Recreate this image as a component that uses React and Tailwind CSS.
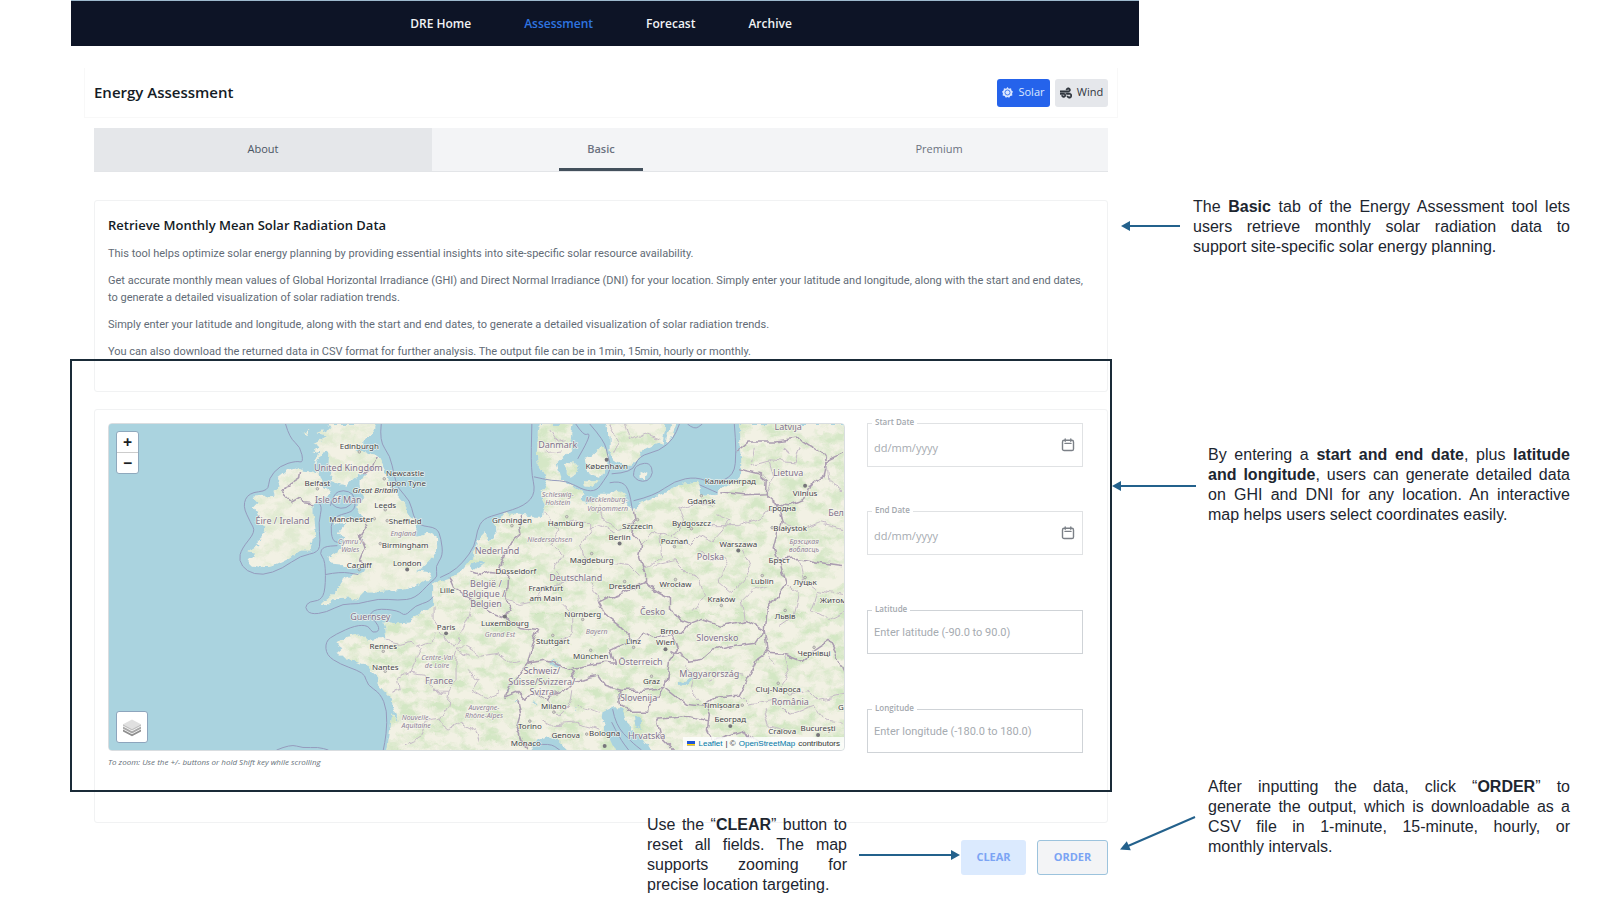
import React from 'react';
import { FaWind } from 'react-icons/fa';

const navItems = [
  { label: 'DRE Home', active: false },
  { label: 'Assessment', active: true },
  { label: 'Forecast', active: false },
  { label: 'Archive', active: false }
];

const paragraphs = [
  'This tool helps optimize solar energy planning by providing essential insights into site-specific solar resource availability.',
  'Get accurate monthly mean values of Global Horizontal Irradiance (GHI) and Direct Normal Irradiance (DNI) for your location. Simply enter your latitude and longitude, along with the start and end dates, to generate a detailed visualization of solar radiation trends.',
  'Simply enter your latitude and longitude, along with the start and end dates, to generate a detailed visualization of solar radiation trends.',
  'You can also download the returned data in CSV format for further analysis. The output file can be in 1min, 15min, hourly or monthly.'
];

// Map geometry, one shared coordinate space (x 108-845, y 423-750)
const landPaths = [
  // Ireland
  'M297 467 287 470 277 478 280 485 272 490 273 495 252 497 257 502 252 507 257 515 254 522 263 527 265 533 255 542 258 545 247 552 255 553 248 560 253 565 262 568 273 565 290 557 300 550 310 550 313 540 315 527 313 513 313 503 323 497 330 493 328 488 322 485 318 473 313 471 303 470Z',
  // Great Britain
  'M327 423 330 427 317 432 327 435 313 442 318 445 310 452 320 450 313 465 322 453 328 452 327 465 333 472 330 480 338 483 347 485 353 478 363 472 366 474 358 482 360 490 363 498 357 507 362 516 356 519 343 518 333 517 335 523 347 522 337 533 345 535 342 542 342 548 327 557 330 562 340 563 348 567 360 568 367 565 365 570 360 573 345 577 340 585 330 595 322 602 328 604 335 598 348 597 355 600 363 592 377 592 390 590 410 587 425 582 432 575 430 572 417 570 423 567 430 560 437 547 437 537 427 532 415 535 417 523 408 513 405 503 393 490 387 478 385 470 377 455 363 452 355 450 363 447 363 440 373 430 375 423Z',
  'M301 432 309 429 306 434ZM334 497 339 493 338 499Z',
  // Continent
  'M387 750 390 730 392 713 399 722 393 705 390 697 383 690 377 683 378 677 372 672 367 665 355 660 345 658 342 655 336 653 342 648 335 643 345 637 360 634 367 640 375 638 386 638 385 628 383 622 390 622 397 623 410 622 412 617 422 612 433 606 433 595 433 583 450 577 462 570 470 560 478 543 483 532 489 526 489 540 496 538 495 527 495 520 507 513 520 513 535 517 542 517 543 510 545 503 540 493 545 487 548 480 538 463 537 450 538 440 538 430 540 423 572 423 570 437 573 448 567 453 558 462 560 470 562 480 573 485 580 490 585 493 580 500 592 502 600 493 612 493 618 488 625 493 628 505 637 510 638 503 653 497 670 490 683 484 697 482 702 485 700 490 705 495 717 493 727 485 740 480 742 473 742 460 740 443 740 423 850 423 850 755 387 755Z',
  // Sweden, Danish islands, Bornholm
  'M605 418 610 437 610 450 613 460 627 465 633 465 640 452 653 445 663 442 667 418Z',
  'M672 420 677 420 669 442 666 440Z',
  'M585 457 592 455 600 447 608 450 608 460 605 473 599 477 587 472ZM565 462 577 463 578 473 572 477 565 472ZM583 480 590 479 598 482 593 487 584 485ZM640 470 647 473 645 478 640 475Z'
];

const waterPaths = [
  'M655 755 643 737 632 730 627 720 625 713 622 707 613 707 603 712 602 718 607 723 603 730 610 738 618 755Z',
  'M634 714 641 720 642 730 636 727ZM526 755 538 740 548 736 558 740 573 755Z',
  'M470 566 481 559 484 562 474 570ZM484 528 492 524 493 536 487 541Z'
];

// Maritime limits as point lists, rounded off by smoothLine()
const seaLines = [
  '285 423 289 437 300 446 303 462 296 460 279 465 268 478 268 490 248 492 242 505 250 522 255 531 241 548 238 560 246 571 262 575 282 568 300 555 318 552 320 540 318 522 322 505 315 500',
  '330 505 333 493 343 489 353 493 354 500 346 508 335 507 330 501',
  '381 423 379 440 390 455 394 475 398 488 410 500 413 515 419 525 437 527 441 538 443 555 435 566 438 576 430 582 415 598 398 600 378 598 357 604 343 603 326 612 310 614 304 607 309 601 320 600 325 590 325 560 319 553 323 546 337 545',
  '354 500 357 510 335 515 330 525 332 540 338 542',
  '440 577 450 573 463 562 475 545 477 530 483 518 500 513 525 505 536 492 531 470 532 423',
  '325 574 340 571 358 574',
  '433 596 430 601 415 605 405 616 398 610 375 608 368 616 375 620 380 630 372 633 368 625 355 625 335 634 325 641 326 655 340 664 357 670 365 675 367 685 380 693 387 710 386 735 383 750',
  '276 750 290 744 302 748 318 747 328 750',
  '576 423 584 435 590 432 588 440 578 458',
  '590 423 605 440 608 455 612 468 604 480 597 490 585 490 567 480 552 480 534 476',
  '612 473 633 472 639 455 660 450 674 438 680 423',
  '634 475 634 468 640 463 650 462 654 472 648 481 638 480 634 475',
  '634 500 655 495 675 480 697 476 714 483 735 475 737 450 735 423',
  '688 423 695 429 703 423',
  '700 484 709 488 718 492',
  '610 482 620 480 629 487 633 510',
  '613 709 616 725 632 742 642 750',
  '612 722 620 738 629 750',
  '536 745 550 743 560 750'
];

const smoothLine = (points) => {
  const n = points.split(' ').map(Number);
  let d = `M${n[0]} ${n[1]}`;
  for (let i = 2; i < n.length - 2; i += 2) {
    d += `Q${n[i]} ${n[i + 1]} ${(n[i] + n[i + 2]) / 2} ${(n[i + 1] + n[i + 3]) / 2}`;
  }
  return `${d}L${n[n.length - 2]} ${n[n.length - 1]}`;
};

const countryLines = [
  'M520 513 518 525 520 535 508 545 505 555 500 565 507 575 505 598 510 610 505 617 492 612 480 605 465 595 455 588 450 577',
  'M470 571 480 574 490 571 502 572',
  'M505 617 520 628 538 630 532 645 528 663 510 685 505 697 517 692 525 700 535 692 548 700 550 695 565 690 575 680 572 670 560 665 545 660 528 663',
  'M517 700 520 715 517 725 522 738 528 750',
  'M572 668 590 665 605 662 615 663 610 650 625 643 637 642 645 631 655 637 672 633 683 633 690 623 677 618 670 607 670 597 660 592 645 583 630 590 610 597 600 602 608 616 620 625 637 642',
  'M633 510 635 523 633 533 642 543 640 557 645 570 645 583',
  'M690 623 703 618 723 625 747 620 765 630',
  'M672 650 690 660 703 658 712 650 735 645 757 642 765 630 768 652 785 653 803 660 815 650 830 640 838 655 845 672',
  'M672 633 678 650 670 660 668 675 665 687 650 703 648 712 628 712 622 705 620 690 645 690 665 687 685 703 705 705 715 697 740 695 752 672 757 660 768 652',
  'M575 680 598 675 605 685 620 690',
  'M767 494 778 503 782 520 775 547 780 560 787 583 775 600 767 610 765 630',
  'M720 492 745 495 767 494 768 480 760 473 740 468',
  'M738 450 750 440 775 440 800 437 820 450 828 460 845 452',
  'M828 460 825 475 812 485 805 500 790 505 778 503',
  'M780 560 800 558 820 562 845 565',
  'M705 705 710 715 708 730 715 745 M657 720 690 717 710 722 M657 720 660 735 675 750 M715 740 745 730 750 738 765 745',
  'M299 471 298 478 287 485 283 492 291 500 299 495 305 502 314 503',
  'M377 456 370 468 363 473 M361 517 367 525 360 535 365 548 360 560 366 565'
];

const regionLines = [
  'M434 606 434 620 442 632 455 648 457 642 463 630 470 615 475 600',
  'M385 640 400 643 412 640 420 648 415 662 410 673 425 675 432 690 450 690 455 680 455 660 458 650 470 655',
  'M434 632 432 640 415 645 M410 673 398 677 400 690 390 693',
  'M450 690 448 705 440 720 425 722 420 738 405 745',
  'M440 720 450 728 460 722 475 730 480 745 M458 650 463 645 480 655 498 652 510 662 520 660',
  'M470 670 478 680 472 690 485 698 500 690 M432 690 447 692',
  'M545 510 550 522 560 530 552 545 562 555 555 570 565 585 M588 530 600 525 615 533 M560 525 575 520 590 522 590 532 580 545 585 560',
  'M562 603 572 612 572 632 560 640 552 650 M505 598 520 603 535 600 545 588 560 585 572 575 590 580 600 602',
  'M615 563 630 565 640 575 M600 505 605 520 620 528 635 523',
  'M642 543 655 530 672 535 685 520 680 508 700 500 715 505 M660 530 662 555 650 565 642 567 M672 535 690 545 700 535 712 540 730 520 718 515',
  'M700 550 710 560 725 555 730 565 718 580 732 592 745 580 752 565 745 550 M655 565 675 560 690 575 700 580 705 595 695 610',
  'M712 525 740 525 760 518 775 510 M745 620 742 600 752 590 770 585',
  'M755 447 752 465 770 460 795 462 800 445 M770 460 775 478 768 490 M785 445 790 455 M828 460 830 480 845 490',
  'M782 520 800 530 820 522 845 528 M800 558 805 580 820 590 812 610 830 620 845 612 M787 583 800 595 795 615 780 625',
  'M820 590 845 595 M785 653 790 670 780 685 790 695 810 690 820 700 845 695',
  'M740 695 750 705 775 700 790 715 815 705 825 720 845 722 M765 710 770 725 790 730 M768 652 775 665',
  'M700 700 690 690 695 675 685 665 M710 680 725 672 745 675',
  'M548 700 560 715 570 705 572 690 M540 720 550 725 575 723 600 730 M580 705 600 712',
  'M610 423 620 440 615 450 M625 423 630 440 645 432 660 438 M545 452 562 450 M550 430 556 440 566 438'
];

const countryLabels = [
  ['United Kingdom', 348, 467], ['Éire / Ireland', 282, 520], ['Isle of Man', 338, 499], ['Guernsey', 370, 617],
  ['France', 439, 681], ['Danmark', 558, 444], ['Nederland', 497, 550], ['België /', 486, 584], ['Belgique /', 484, 594],
  ['Belgien', 486, 604], ['Deutschland', 576, 577], ['Polska', 711, 556], ['Česko', 653, 612], ['Slovensko', 718, 638],
  ['Österreich', 641, 662], ['Magyarország', 710, 674], ['Schweiz/', 542, 671], ['Suisse/Svizzera/', 542, 682],
  ['Svizra', 542, 692], ['Slovenija', 639, 698], ['Hrvatska', 647, 736], ['România', 791, 702], ['Lietuva', 789, 472],
  ['Latvija', 789, 426], ['Бел', 837, 512]
];

const cityLabels = [
  ['Edinburgh', 359, 445], ['Newcastle', 405, 472], ['upon Tyne', 406, 482], ['Belfast', 317, 482], ['Leeds', 385, 504],
  ['Manchester', 351, 518], ['Sheffield', 405, 520], ['Birmingham', 405, 544], ['Cardiff', 359, 564], ['London', 407, 562],
  ['Lille', 447, 590], ['Paris', 446, 627], ['Rennes', 383, 646], ['Nantes', 385, 667], ['København', 607, 465],
  ['Groningen', 512, 519], ['Hamburg', 566, 522], ['Szczecin', 638, 525], ['Berlin', 620, 536], ['Bydgoszcz', 692, 522],
  ['Poznań', 675, 540], ['Warszawa', 739, 543], ['Magdeburg', 592, 559], ['Düsseldorf', 516, 570], ['Frankfurt', 546, 588],
  ['am Main', 546, 598], ['Dresden', 625, 586], ['Wrocław', 676, 584], ['Lublin', 763, 581], ['Kraków', 722, 599],
  ['Gdańsk', 702, 500], ['Калининград', 731, 480], ['Vilnius', 806, 492], ['Гродна', 783, 507], ['Białystok', 791, 527],
  ['Брэст', 780, 559], ['Луцьк', 806, 582], ['Житом', 834, 600], ['Львів', 786, 616], ['Чернівці', 815, 653],
  ['Luxembourg', 505, 623], ['Nürnberg', 583, 614], ['Stuttgart', 553, 641], ['München', 591, 656], ['Linz', 634, 641],
  ['Brno', 670, 631], ['Wien', 666, 642], ['Graz', 652, 681], ['Milano', 554, 706], ['Torino', 530, 726],
  ['Genova', 566, 735], ['Bologna', 605, 733], ['Monaco', 526, 743], ['Timișoara', 722, 705], ['Београд', 731, 719],
  ['Cluj-Napoca', 779, 689], ['Craiova', 783, 731], ['București', 819, 728], ['G', 842, 707]
];

const regionLabels = [
  ['England', 403, 533], ['Cymru /', 350, 541], ['Wales', 350, 549], ['Centre-Val', 437, 658], ['de Loire', 437, 666],
  ['Nouvelle-', 416, 718], ['Aquitaine', 416, 726], ['Auvergne-', 484, 708], ['Rhône-Alpes', 484, 716], ['Grand Est', 500, 635],
  ['Bayern', 597, 632], ['Niedersachsen', 550, 539], ['Schleswig-', 558, 494], ['Holstein', 558, 502],
  ['Mecklenburg-', 607, 499], ['Vorpommern', 608, 508], ['Брэсцкая', 805, 541], ['вобласць', 805, 549]
];

const cityDots = [
  [359, 451], [384, 478], [317, 488], [385, 509], [374, 518], [387, 520], [380, 543], [359, 569], [383, 651], [385, 671],
  [512, 525], [567, 516], [638, 519], [592, 553], [692, 528], [675, 546], [676, 579], [625, 581], [763, 575], [722, 605],
  [702, 495], [553, 635], [591, 650], [583, 619], [634, 647], [652, 676], [554, 712], [530, 721], [587, 734], [743, 705],
  [779, 683], [806, 577], [786, 610], [815, 647], [773, 527]
];

const capitalDots = [[407, 569], [446, 633], [607, 459], [620, 543], [739, 550], [666, 649], [806, 485], [731, 726], [819, 735], [505, 616], [605, 746]];

const MapDrawing = () => (
  <svg
    viewBox="108 423 737 327"
    preserveAspectRatio="xMidYMid slice"
    className="block h-full w-full font-['Noto_Sans',sans-serif]"
    role="img"
    aria-label="Map of Europe"
  >
    <defs>
      <filter id="rough" x="0" y="0" width="1" height="1">
        <feTurbulence type="fractalNoise" baseFrequency="0.13" numOctaves="3" seed="4" result="n" />
        <feDisplacementMap in="SourceGraphic" in2="n" scale="7" xChannelSelector="R" yChannelSelector="G" />
      </filter>
      <filter id="wiggle" x="0" y="0" width="1" height="1" colorInterpolationFilters="sRGB">
        <feTurbulence type="fractalNoise" baseFrequency="0.08" numOctaves="2" seed="7" result="n" />
        <feDisplacementMap in="SourceGraphic" in2="n" scale="9" xChannelSelector="R" yChannelSelector="G" />
        <feGaussianBlur stdDeviation="0.35" />
      </filter>
      <filter id="terrain" x="0" y="0" width="1" height="1" colorInterpolationFilters="sRGB">
        <feTurbulence type="fractalNoise" baseFrequency="0.06 0.09" numOctaves="5" seed="11" />
        <feColorMatrix values="0 0 0 0 0.79  0 0 0 0 0.89  0 0 0 0 0.73  3.2 0 0 0 -1.3" />
      </filter>
      <clipPath id="land">
        {landPaths.map((d) => (
          <path key={d} d={d} />
        ))}
      </clipPath>
    </defs>

    <rect x="108" y="423" width="737" height="327" fill="#aad3df" />

    <g filter="url(#rough)">
      <rect x="90" y="405" width="773" height="363" fill="#aad3df" />
      {landPaths.map((d) => (
        <path key={d} d={d} fill="#f2f1e4" />
      ))}
      <g clipPath="url(#land)">
        <rect x="108" y="423" width="330" height="190" filter="url(#terrain)" opacity="0.45" />
        <rect x="438" y="423" width="415" height="190" filter="url(#terrain)" opacity="0.7" />
        <rect x="108" y="613" width="745" height="142" filter="url(#terrain)" opacity="0.75" />
      </g>
      {waterPaths.map((d) => (
        <path key={d} d={d} fill="#aad3df" />
      ))}
      <path d="M680 684 690 677 693 679 682 686ZM552 661 560 665 558 667ZM533 699 536 704M515 701 520 702M576 707 578 711M508 690 512 688" fill="#aad3df" stroke="#aad3df" />
    </g>

    <g fill="none" strokeLinejoin="round" filter="url(#wiggle)">
      <rect x="90" y="405" width="773" height="363" />
      <g stroke="#c6bbc7">
        {regionLines.map((d) => (
          <path key={d} d={d} />
        ))}
      </g>
      <g stroke="#ab9db1" strokeWidth="1.5">
        {countryLines.map((d) => (
          <path key={d} d={d} />
        ))}
      </g>
    </g>

    <g fill="none" stroke="#959bbd" strokeWidth="1" strokeLinejoin="round">
      {seaLines.map((points) => (
        <path key={points} d={smoothLine(points)} />
      ))}
    </g>

    {cityDots.map(([x, y]) => (
      <circle key={`${x}-${y}`} cx={x} cy={y} r="1.3" fill="#d8d5d0" stroke="#8a8a8a" strokeWidth="0.6" />
    ))}
    {capitalDots.map(([x, y]) => (
      <circle key={`${x}-${y}`} cx={x} cy={y} r="2" fill="#77757b" />
    ))}

    <g textAnchor="middle" stroke="#f8f8f0" strokeOpacity="0.75" strokeWidth="1.6" paintOrder="stroke" strokeLinejoin="round">
      <g fontSize="9" fill="#81728c">
        {countryLabels.map(([name, x, y]) => (
          <text key={name} x={x} y={y + 3}>{name}</text>
        ))}
      </g>
      <g fontSize="7" fill="#8f8297" fontStyle="italic">
        {regionLabels.map(([name, x, y]) => (
          <text key={name} x={x} y={y + 2}>{name}</text>
        ))}
      </g>
      <g fontSize="8" fill="#45444a">
        {cityLabels.map(([name, x, y]) => (
          <text key={name} x={x} y={y + 3}>{name}</text>
        ))}
        <text x="375" y="492" fontStyle="italic">Great Britain</text>
      </g>
    </g>
  </svg>
);

const SunIcon = () => (
  <svg viewBox="0 0 24 24" className="h-[11px] w-[11px]" aria-hidden="true">
    <path
      d="M12 0l3 3.600L19.800 2.800 20.400 7.300 24 10.200 22 13.800 22.600 18.400 18.200 19.600 15.600 23.600 12 21.600 8.400 23.600 5.800 19.600 1.400 18.400 2 13.800 0 10.200 3.600 7.300 4.200 2.800 9 3.600z"
      fill="currentColor"
    />
    <circle cx="12" cy="12" r="5.500" fill="none" stroke="#2563eb" strokeWidth="1.800" />
  </svg>
);

const CalendarIcon = () => (
  <svg viewBox="0 0 14 14" className="h-[14px] w-[14px]" fill="none" stroke="#7b8087" strokeWidth="1.4" strokeLinecap="round" aria-hidden="true">
    <rect x="1.5" y="2.3" width="11" height="10.2" rx="1.6" />
    <path d="M4.2 1v2.2M9.8 1v2.2M4 5.4h6" />
  </svg>
);

const LayersIcon = () => (
  <svg viewBox="0 0 26 26" className="h-[26px] w-[26px]" aria-hidden="true">
    <path d="M4 15.500 13 20.300l9-4.800v2L13 22.300 4 17.500z" fill="#8f8f8f" />
    <path d="M4 12.500 13 17.300l9-4.800v2.200L13 19.500 4 14.700z" fill="#a9a9a9" />
    <path d="M4 10.200 13 5.400l9 4.800-9 4.800z" fill="#e0e0e0" />
    <path d="M4 10.200 13 15l9-4.800v1.600L13 16.600l-9-4.800z" fill="#c0c0c0" />
  </svg>
);

const Field = ({ id, label, placeholder, date }) => (
  <div className="relative">
    <label htmlFor={id} className="absolute -top-[7px] left-[5px] bg-white px-[3px] text-[8px] leading-3 font-semibold text-[#a3a8ae]">
      {label}
    </label>
    <input
      id={id}
      type="text"
      placeholder={placeholder}
      className={`block h-11 w-full border bg-white px-[6px] text-[11px] text-gray-700 placeholder:text-[#a6abb1] outline-none ${
        date ? 'border-[#e0e2e4] pt-1 pr-8' : "border-[#cfd3d7] font-['Roboto',sans-serif]"
      }`}
    />
    {date && (
      <button type="button" aria-label={`Pick ${label}`} className="absolute top-[15px] right-2">
        <CalendarIcon />
      </button>
    )}
  </div>
);

const Arrow = ({ width, className }) => (
  <svg width={width} height="10" className={`absolute ${className}`} aria-hidden="true">
    <path d={`M8 5H${width}`} stroke="#23618c" strokeWidth="2" />
    <path d="M0 5 9 0v10z" fill="#23618c" />
  </svg>
);

// Every line but the last is spread over the full width of the note
const Note = ({ lines, className = '' }) => (
  <p className={`font-['Liberation_Sans',Arial,sans-serif] text-base leading-5 text-[#1d2630] ${className}`}>
    {lines.map((line, index) => (
      <span
        key={index}
        className={index < lines.length - 1 ? 'block text-justify [text-align-last:justify]' : 'block'}
      >
        {line}
      </span>
    ))}
  </p>
);

const App = () => {
  return (
    <div className="flex min-h-screen bg-white pl-[71px] font-['Open_Sans',sans-serif]">
      <main className="relative min-w-0 flex-1">
        <nav className="flex h-[46px] items-center justify-center gap-[53px] border-t border-[#9db9cd] bg-[#0d1426] pr-2 text-xs font-semibold">
          {navItems.map((item) => (
            <a key={item.label} href="#" className={item.active ? 'text-[#2f74e0]' : 'text-[#f1f3f5]'}>
              {item.label}
            </a>
          ))}
        </nav>

        <header className="mt-[22px] mr-[21px] ml-[13px] flex h-[50px] items-center justify-between border-x border-b border-[#f8f8f8] px-[9px]">
          <h1 className="text-[15px] font-semibold text-[#141c26]">Energy Assessment</h1>
          <div className="flex gap-[5px] text-[11px]">
            <button type="button" className="flex h-7 w-[53px] items-center justify-center gap-[5px] rounded-[3px] bg-[#2563eb] text-[#dbe7ff]">
              <SunIcon />
              Solar
            </button>
            <button type="button" className="flex h-7 w-[53px] items-center justify-center gap-[5px] rounded-[3px] bg-[#e5e7eb] text-[#30363e]">
              <FaWind className="h-3 w-3" stroke="currentColor" strokeWidth="22" />
              Wind
            </button>
          </div>
        </header>

        <div className="mr-[31px] ml-[23px]">
          <div role="tablist" className="mt-[10px] grid h-11 grid-cols-3 border-b border-[#e3e5e8] bg-[#f3f4f6] text-[11px] text-[#6b7280]">
            <button type="button" role="tab" className="bg-[#e5e7ea] text-[#4b5563]">About</button>
            <button type="button" role="tab" aria-selected="true" className="relative font-semibold">
              Basic
              <span className="absolute bottom-0 left-1/2 h-[3px] w-[84px] -translate-x-1/2 bg-[#43505c]" />
            </button>
            <button type="button" role="tab">Premium</button>
          </div>

          <section className="mt-7 rounded-[3px] border border-[#f1f2f3] px-[13px] pt-[14px] pb-[31px]">
            <h2 className="text-[13px] leading-5 font-semibold text-[#141c26]">Retrieve Monthly Mean Solar Radiation Data</h2>
            <div className="mt-[10px] space-y-[10px] font-['Roboto',sans-serif] text-[11px] leading-[17px] text-[#626b76]">
              {paragraphs.map((text) => (
                <p key={text}>{text}</p>
              ))}
            </div>
          </section>

          <section className="mt-[17px] flex gap-[22px] rounded-[3px] border border-[#f1f2f3] pt-[13px] pr-6 pb-[53px] pl-[13px]">
            <div className="min-w-0 flex-1">
              <div className="relative h-[328px] overflow-hidden rounded border border-[#d9dde0]">
                <MapDrawing />
                <div className="absolute top-[7px] left-[7px] flex w-[23px] flex-col rounded-[3px] border border-[#8fa9bd] bg-white text-base leading-none font-bold text-[#1b1f24]">
                  <button type="button" aria-label="Zoom in" className="flex h-[21px] items-center justify-center border-b border-[#cccccc]">+</button>
                  <button type="button" aria-label="Zoom out" className="flex h-5 items-center justify-center">−</button>
                </div>
                <button type="button" aria-label="Layers" className="absolute bottom-[7px] left-[7px] flex h-8 w-8 items-center justify-center rounded-[3px] border border-[#8da5bd] bg-white">
                  <LayersIcon />
                </button>
                <div className="absolute right-0 bottom-0 flex h-[13px] items-center gap-[3px] bg-white/80 px-1 font-['Liberation_Sans',Arial,sans-serif] text-[8px] text-[#333333]">
                  <svg viewBox="0 0 8 6" className="h-[6px] w-2" aria-hidden="true">
                    <path fill="#1f55d6" d="M0 0h8v3H0z" />
                    <path fill="#ffd500" d="M0 3h8v1.500H0z" />
                    <path fill="#8b8b8b" d="M0 4.500h8V5H0z" />
                  </svg>
                  <a href="#" className="text-[#0078a8]">Leaflet</a>
                  <span>| ©</span>
                  <a href="#" className="text-[#0078a8]">OpenStreetMap</a>
                  <span>contributors</span>
                </div>
              </div>
              <p className="mt-1 text-[8px] leading-[14px] text-[#66707a] italic">
                To zoom: Use the +/- buttons or hold Shift key while scrolling
              </p>
            </div>

            <form className="flex w-[216px] flex-col gap-[55px]">
              <div className="flex flex-col gap-11">
                <Field id="start" label="Start Date" placeholder="dd/mm/yyyy" date />
                <Field id="end" label="End Date" placeholder="dd/mm/yyyy" date />
              </div>
              <Field id="lat" label="Latitude" placeholder="Enter latitude (-90.0 to 90.0)" />
              <Field id="lon" label="Longitude" placeholder="Enter longitude (-180.0 to 180.0)" />
            </form>
          </section>

          <div className="-mt-2 flex items-start justify-end">
            <div className="relative mr-[114px]">
              <Note
                className="w-[200px]"
                lines={[
                  <>Use the “<b>CLEAR</b>” button to</>,
                  'reset all fields. The map',
                  'supports zooming for',
                  'precise location targeting.'
                ]}
              />
              <Arrow width={101} className="top-[35px] left-[212px] rotate-180" />
            </div>
            <div className="mt-[25px] flex gap-[11px] text-[11px] font-bold text-[#7ba4f4]">
              <button type="button" className="h-[35px] w-[65px] rounded-[3px] bg-[#dbeafe]">CLEAR</button>
              <button type="button" className="h-[35px] w-[71px] rounded-[3px] border border-[#9cc3dd] bg-[#f3f4f6]">ORDER</button>
            </div>
          </div>
        </div>

        {/* Highlight frame drawn over both cards */}
        <div className="pointer-events-none absolute top-[359px] right-[27px] -left-px h-[433px] border-2 border-[#1a2b38]" />
      </main>

      <aside className="w-[461px] shrink-0 pr-[30px] pl-[54px]">
        <div className="relative mt-[197px]">
          <Arrow width={59} className="top-6 right-[390px]" />
          <Note
            lines={[
              <>The <b>Basic</b> tab of the Energy Assessment tool lets</>,
              'users retrieve monthly solar radiation data to',
              'support site-specific solar energy planning.'
            ]}
          />
        </div>
        <div className="relative mt-[188px] ml-[15px]">
          <Arrow width={84} className="top-9 right-[374px]" />
          <Note
            lines={[
              <>By entering a <b>start and end date</b>, plus <b>latitude</b></>,
              <><b>and longitude</b>, users can generate detailed data</>,
              'on GHI and DNI for any location. An interactive',
              'map helps users select coordinates easily.'
            ]}
          />
        </div>
        <div className="relative mt-[252px] ml-[15px]">
          <svg width="76" height="38" className="absolute top-[38px] right-[374px]" aria-hidden="true">
            <path d="M75 2 8 31" stroke="#23618c" strokeWidth="2" />
            <path d="M0 34.500 6.800 26.200 10.800 35.200z" fill="#23618c" />
          </svg>
          <Note
            lines={[
              <>After inputting the data, click “<b>ORDER</b>” to</>,
              'generate the output, which is downloadable as a',
              'CSV file in 1-minute, 15-minute, hourly, or',
              'monthly intervals.'
            ]}
          />
        </div>
      </aside>
    </div>
  );
};

export default App;
